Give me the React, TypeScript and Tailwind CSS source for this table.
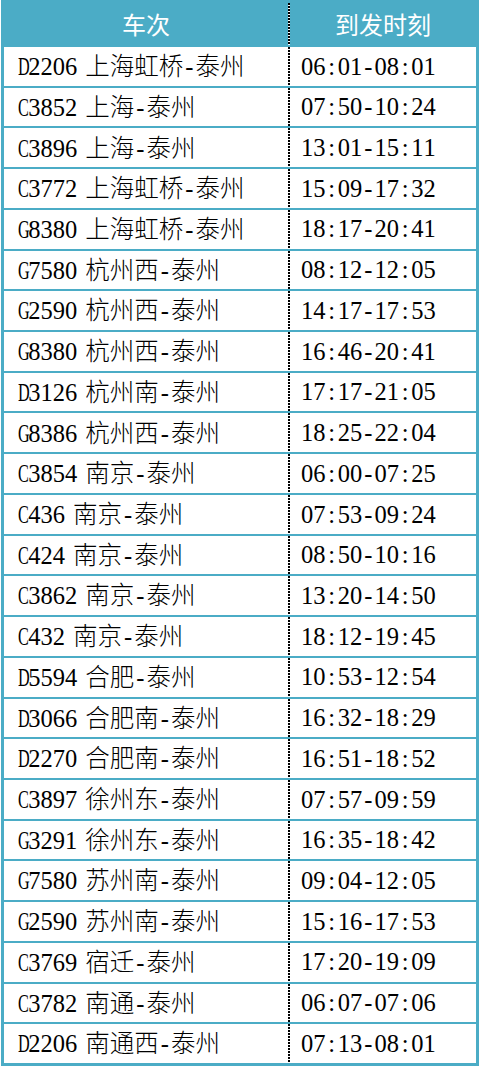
import React from 'react';

type Row = { train: string; time: string };

const rows: Row[] = [
  { train: 'D2206 上海虹桥-泰州', time: '06:01-08:01' },
  { train: 'C3852 上海-泰州', time: '07:50-10:24' },
  { train: 'C3896 上海-泰州', time: '13:01-15:11' },
  { train: 'C3772 上海虹桥-泰州', time: '15:09-17:32' },
  { train: 'G8380 上海虹桥-泰州', time: '18:17-20:41' },
  { train: 'G7580 杭州西-泰州', time: '08:12-12:05' },
  { train: 'G2590 杭州西-泰州', time: '14:17-17:53' },
  { train: 'G8380 杭州西-泰州', time: '16:46-20:41' },
  { train: 'D3126 杭州南-泰州', time: '17:17-21:05' },
  { train: 'G8386 杭州西-泰州', time: '18:25-22:04' },
  { train: 'C3854 南京-泰州', time: '06:00-07:25' },
  { train: 'C436 南京-泰州', time: '07:53-09:24' },
  { train: 'C424 南京-泰州', time: '08:50-10:16' },
  { train: 'C3862 南京-泰州', time: '13:20-14:50' },
  { train: 'C432 南京-泰州', time: '18:12-19:45' },
  { train: 'D5594 合肥-泰州', time: '10:53-12:54' },
  { train: 'D3066 合肥南-泰州', time: '16:32-18:29' },
  { train: 'D2270 合肥南-泰州', time: '16:51-18:52' },
  { train: 'C3897 徐州东-泰州', time: '07:57-09:59' },
  { train: 'G3291 徐州东-泰州', time: '16:35-18:42' },
  { train: 'G7580 苏州南-泰州', time: '09:04-12:05' },
  { train: 'G2590 苏州南-泰州', time: '15:16-17:53' },
  { train: 'C3769 宿迁-泰州', time: '17:20-19:09' },
  { train: 'C3782 南通-泰州', time: '06:07-07:06' },
  { train: 'D2206 南通西-泰州', time: '07:13-08:01' },
];

// SimSun-like: latin chars take half a cell, CJK a full one
function Mixed({ text }: { text: string }) {
  return (
    <span className="whitespace-nowrap text-[24.5px] leading-none text-black">
      {text.split('').map((ch, i) => {
        if (ch.charCodeAt(0) > 0x2e80) {
          return (
            <span
              key={i}
              className="inline-block w-[24.5px] text-center font-['Noto_Sans_CJK_SC',sans-serif] font-light"
            >
              {ch}
            </span>
          );
        }
        if (ch === ' ') {
          return (
            <span key={i} className="inline-block w-[8px]">
              {'\u00a0'}
            </span>
          );
        }
        const letter = /[A-Z]/.test(ch);
        return (
          <span
            key={i}
            className={
              letter
                ? "inline-block w-[12.25px] scale-x-[0.66] text-center font-['Liberation_Serif',serif]"
                : "inline-block w-[12.25px] text-center font-['Liberation_Serif',serif]"
            }
          >
            {ch}
          </span>
        );
      })}
    </span>
  );
}

const dotted =
  'bg-[repeating-linear-gradient(to_bottom,#000_0_2px,#fff_2px_3px)]';

export default function App() {
  return (
    <div className="min-h-[1068px] w-[480px] bg-white pl-[1px]">
      <div className="w-[478px] border-x-[3px] border-b-[3px] border-[#4bacc6] bg-white">
        <div className="grid h-[45px] grid-cols-[284px_2px_186px] bg-[#4bacc6] font-['Noto_Sans_CJK_SC',sans-serif] text-[24px] text-white">
          <div className="flex items-center justify-center pt-[3px]">车次</div>
          <div className={`mt-[3px] ${dotted}`} />
          <div className="flex items-center justify-center pt-[3px]">到发时刻</div>
        </div>
        {rows.map((r, i) => (
          <div
            key={i}
            className="grid h-[40.73px] grid-cols-[284px_2px_186px] border-t-2 border-[#4bacc6]"
          >
            <div className="flex items-center pl-[12px]">
              <Mixed text={r.train} />
            </div>
            <div className={dotted} />
            <div className="flex items-center pl-[11px]">
              <Mixed text={r.time} />
            </div>
          </div>
        ))}
      </div>
    </div>
  );
}
